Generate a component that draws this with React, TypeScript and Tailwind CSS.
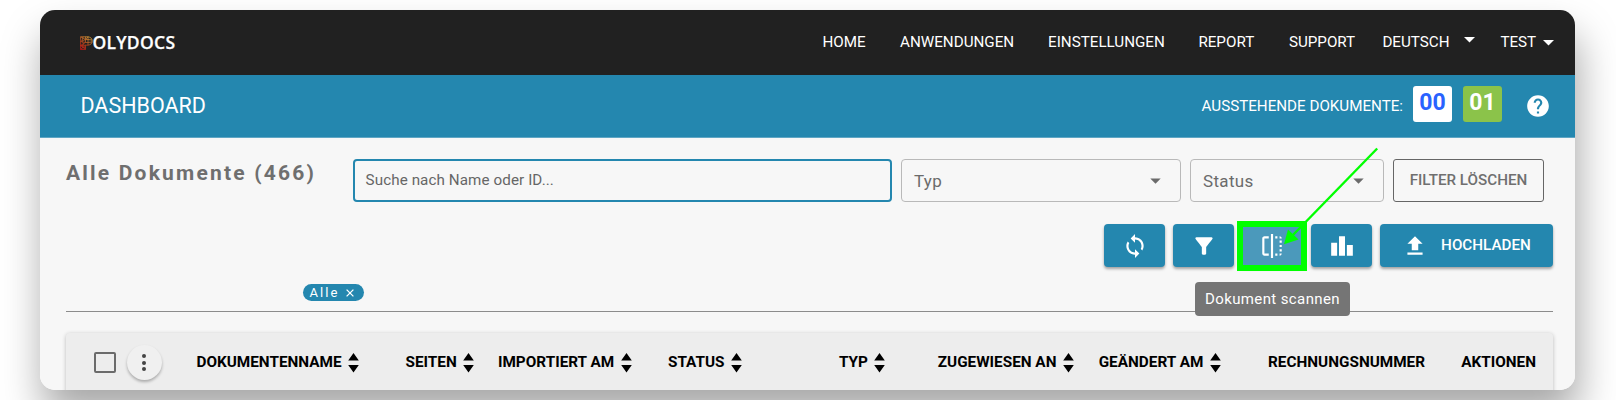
import type { ReactNode } from 'react';
import { MdArrowDropDown, MdFilterAlt, MdFlip, MdHelp, MdLeaderboard, MdLoop, MdUpload } from 'react-icons/md';

function Logo() {
  return (
    <div className="flex w-[782px] shrink-0 items-center pl-[40px] text-white">
      <svg width="13" height="14" viewBox="0 0 13 14" className="shrink-0" fill="none" strokeWidth="0.8">
        <defs>
          <linearGradient id="logoFill" x1="0" y1="1" x2="0.7" y2="0">
            <stop offset="0" stopColor="#cc1414" />
            <stop offset="0.45" stopColor="#b0401c" />
            <stop offset="1" stopColor="#d59a38" />
          </linearGradient>
        </defs>
        <path
          stroke="url(#logoFill)"
          d="M.6.8H8Q12.2 1.4 12.2 5Q12.2 8.6 8 9.2H5.5V13.4H.6ZM5.5 3.5H8V6.5H5.5ZM.6.8L5.5 3.5L.6 5.5L5.5 6.5L.6 9.5L5.5 9.2L.6 13.4M5.5.8V3.5L8 .8L8 3.5L12 4M8 6.5L12 6M8 6.5V9.2M.6 9.5L5.5 13.4M3 .8L2 5L3.5 8L2 11L5.5 11.5"
        />
      </svg>
      <span className="-ml-px font-['Open_Sans'] text-[17.5px] font-semibold tracking-[0.28px] [-webkit-text-stroke:0.25px_white]">OLYDOCS</span>
    </div>
  );
}

function NavItem({ className, children }: { className: string; children: ReactNode }) {
  return <a className={`flex shrink-0 items-center whitespace-nowrap ${className}`}>{children}</a>;
}

function Caret({ className }: { className: string }) {
  return (
    <svg width="11" height="6" viewBox="0 0 11 6" className={className} fill="currentColor">
      <path d="M0 0h11L5.5 5.5z" />
    </svg>
  );
}

function SelectBox({ label, className }: { label: string; className: string }) {
  return (
    <div className={`flex h-[43px] shrink-0 items-center justify-between rounded-[4px] border border-[#b9b9b9] pr-3 pl-3 text-[17px] tracking-[0.35px] text-[#6b6b6b] ${className}`}>
      <span className="pt-[3px]">{label}</span>
      <MdArrowDropDown size={25} />
    </div>
  );
}

function ActionButton({ children, className = 'w-[61px] bg-[#2487af]' }: { children: ReactNode; className?: string }) {
  return (
    <button className={`flex h-[43px] shrink-0 items-center justify-center rounded-[4px] text-white shadow-[0_2px_3px_rgba(0,0,0,0.35)] ${className}`}>
      {children}
    </button>
  );
}

function Column({ label, className, sortable = true }: { label: string; className: string; sortable?: boolean }) {
  return (
    <div className={`flex shrink-0 items-center whitespace-nowrap ${className}`}>
      <span>{label}</span>
      {sortable && (
        <svg width="11" height="20" viewBox="0 0 11 20" className="ml-[6.5px]" fill="currentColor">
          <path d="M5.5 0L10.8 7.5H.2zM.2 12H10.8L5.5 19.5z" />
        </svg>
      )}
    </div>
  );
}

export default function App() {
  return (
    <div className="h-[400px] w-[1616px] overflow-hidden bg-white pt-[10px] font-['Roboto',sans-serif]">
      <div className="ml-[40.4px] h-[380px] w-[1535px] rounded-[15px] shadow-[3px_25px_40px_rgba(0,0,0,0.35)]">
        <div className="relative h-[380px] overflow-hidden rounded-[15px] bg-[#f7f7f7]">
          <nav className="flex h-[65px] bg-[#212121] text-[15.2px] text-white">
            <Logo />
            <div className="flex pb-px">
              <NavItem className="w-[77.6px]">HOME</NavItem>
              <NavItem className="w-[148.1px]">ANWENDUNGEN</NavItem>
              <NavItem className="w-[150.3px]">EINSTELLUNGEN</NavItem>
              <NavItem className="w-[90.5px]">REPORT</NavItem>
              <NavItem className="w-[93.5px]">SUPPORT</NavItem>
              <NavItem className="w-[118px]">
                DEUTSCH
                <Caret className="mb-[4px] ml-[14.5px]" />
              </NavItem>
              <NavItem className="">
                TEST
                <Caret className="mt-0.5 ml-[7px]" />
              </NavItem>
            </div>
          </nav>

          <header className="flex h-[62.5px] items-center border-b border-[#5fa6c4] bg-[#2487af] pl-[40.1px] text-white">
            <h1 className="flex-1 pt-px text-[21.5px]">DASHBOARD</h1>
            <span className="pt-[1.5px] text-[15.2px] tracking-[-0.01px]">AUSSTEHENDE DOKUMENTE:</span>
            <span className="mb-[4px] ml-[10px] flex h-[35.5px] w-[39px] items-center justify-center rounded-[3px] bg-white pb-[2px] text-[23px] font-bold text-[#2962ff]">00</span>
            <span className="mb-[4px] ml-[11px] flex h-[35.5px] w-[39px] items-center justify-center rounded-[3px] bg-[#8bc34a] pb-[2px] text-[23px] font-bold">01</span>
            <MdHelp size={26} className="mr-[24.4px] ml-[23px]" />
          </header>

          <main className="pt-[21.5px] pr-[22.4px] pl-[25.6px]">
            <div className="flex">
              <h2 className="w-[287.4px] shrink-0 pt-px text-[21px] leading-[27px] font-bold tracking-[2.2px] text-[#6f6f6f]">Alle Dokumente (466)</h2>
              <div className="flex h-[43px] w-[538.6px] shrink-0 items-center rounded-[4px] border-2 border-[#2487af] pl-[10.2px] text-[15.2px] tracking-[0.09px] text-[#666]">
                Suche nach Name oder ID...
              </div>
              <SelectBox label="Typ" className="ml-[9px] w-[280px]" />
              <SelectBox label="Status" className="ml-[9px] w-[194px]" />
              <button className="ml-[9px] flex h-[43px] w-[151px] shrink-0 items-center justify-center rounded-[3px] border border-[#666] text-[15.2px] font-medium text-[#6f6f6f]">
                FILTER LÖSCHEN
              </button>
            </div>

            <div className="mt-[22px] flex justify-end gap-2">
              <ActionButton><MdLoop size={26} /></ActionButton>
              <ActionButton><MdFilterAlt size={26} /></ActionButton>
              <div className="relative">
                <ActionButton className="w-[61px] bg-[#4b99bb]"><MdFlip size={26} className="mr-px" /></ActionButton>
                <div className="absolute -top-[3.5px] -left-[5px] h-[50px] w-[70px] border-[6px] border-[#00ff00]" />
                <div className="absolute top-[58px] -left-[47px] z-10 flex h-[34px] w-[155px] items-center justify-center rounded-[4px] bg-[#757575] text-[15px] tracking-[0.38px] whitespace-nowrap text-white">
                  Dokument scannen
                </div>
              </div>
              <ActionButton><MdLeaderboard size={26} /></ActionButton>
              <ActionButton className="w-[173px] bg-[#2487af]">
                <MdUpload size={26} />
                <span className="ml-[13px] text-[15.2px] font-medium tracking-[0.02px]">HOCHLADEN</span>
              </ActionButton>
            </div>

            <div className="mt-[17px] ml-[237px] flex h-[17px] w-[61px] items-center rounded-full bg-[#2487af] pl-[6.5px] text-[13px] tracking-[2.1px] text-white">
              Alle
              <svg width="8" height="8" viewBox="0 0 8 8" className="ml-[6.5px]" stroke="currentColor" strokeWidth="1.3">
                <path d="M.6.6l6.8 6.8M7.4.6L.6 7.4" />
              </svg>
            </div>
            <div className="mt-[10px] h-px bg-[#8c8c8c]" />

            <div className="mt-[21px] flex h-[70px] items-start rounded-t-[4px] bg-[#ededed] pt-[12px] pl-[28px] text-[15.32px] font-bold text-black shadow-[0_1px_4px_rgba(0,0,0,0.24)]">
              <div className="flex h-[35px] items-center">
                <span className="h-[21px] w-[22px] shrink-0 rounded-[2px] border-2 border-[#6b6b6b]" />
                <span className="mr-[34.5px] ml-[11px] flex size-[35px] shrink-0 flex-col items-center justify-center gap-[2.5px] rounded-full bg-[#f0f0f0] shadow-[0_2px_3px_rgba(0,0,0,0.28)]">
                  <i className="size-1 rounded-full bg-[#444]" />
                  <i className="size-1 rounded-full bg-[#444]" />
                  <i className="size-1 rounded-full bg-[#444]" />
                </span>
                <Column label="DOKUMENTENNAME" className="w-[209px]" />
                <Column label="SEITEN" className="w-[92.5px]" />
                <Column label="IMPORTIERT AM" className="w-[170px]" />
                <Column label="STATUS" className="w-[171px]" />
                <Column label="TYP" className="w-[98.8px]" />
                <Column label="ZUGEWIESEN AN" className="w-[160.9px]" />
                <Column label="GEÄNDERT AM" className="w-[169.4px]" />
                <Column label="RECHNUNGSNUMMER" className="w-[193.2px]" sortable={false} />
                <Column label="AKTIONEN" className="" sortable={false} />
              </div>
            </div>
          </main>

          <svg className="pointer-events-none absolute top-0 left-0 z-20" width="1535" height="380" viewBox="40 10 1535 380">
            <path d="M1377.2 148.5L1292 236" stroke="#00ff00" strokeWidth="2.4" />
            <path d="M1284 244.2L1288 229.5L1298.500 239.500Z" fill="#00ff00" />
          </svg>
        </div>
      </div>
    </div>
  );
}
